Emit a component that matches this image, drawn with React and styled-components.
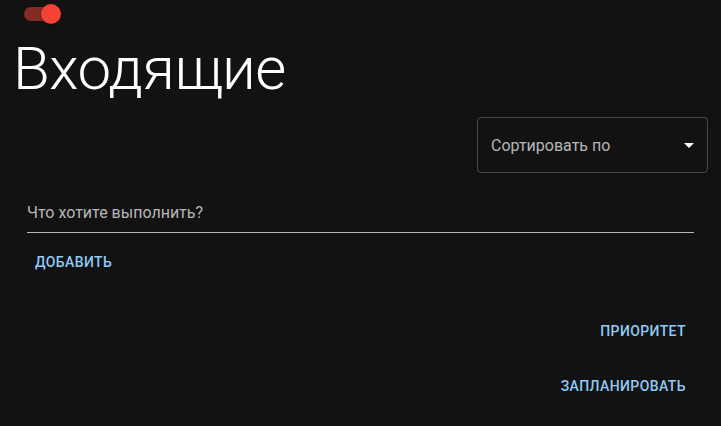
import styled, { createGlobalStyle } from 'styled-components'

const GlobalStyle = createGlobalStyle`
  html, body {
    margin: 0;
    background: #121212;
    color: #fff;
    font-family: Roboto, "Noto Sans", "Liberation Sans", sans-serif;
  }
`

const Page = styled.div`
  padding: 0 13px;
  min-height: 426px;
  box-sizing: border-box;
`

const ThemeSwitch = styled.div`
  position: relative;
  width: 37px;
  height: 28px;
  margin-left: 11px;
`

const Track = styled.div`
  position: absolute;
  top: 7px;
  left: 0;
  width: 34px;
  height: 14px;
  border-radius: 7px;
  background: #f44336;
  opacity: 0.5;
`

const Thumb = styled.div`
  position: absolute;
  top: 4px;
  left: 17px;
  width: 20px;
  height: 20px;
  border-radius: 50%;
  background: #f44336;
  box-shadow: 0 2px 1px -1px rgba(0,0,0,0.2), 0 1px 1px 0 rgba(0,0,0,0.14), 0 1px 3px 0 rgba(0,0,0,0.12);
`

const Title = styled.h2`
  margin: 5px 0 0;
  font-size: 60px;
  font-weight: 300;
  line-height: 72px;
  letter-spacing: -0.5px;
`

const SortRow = styled.div`
  display: flex;
  justify-content: flex-end;
  margin-top: 12px;
`

const SelectBox = styled.div`
  width: 231px;
  height: 56px;
  box-sizing: border-box;
  border: 1px solid rgba(255, 255, 255, 0.23);
  border-radius: 4px;
  display: flex;
  align-items: center;
  justify-content: space-between;
  padding: 0 6px 0 13px;
  font-size: 16px;
  color: rgba(255, 255, 255, 0.7);
`

const ArrowIcon = styled.svg`
  width: 24px;
  height: 24px;
  fill: #fff;
`

const TaskForm = styled.div`
  padding: 0 14px;
  margin-top: 28px;
`

const Field = styled.div`
  height: 31px;
  border-bottom: 1px solid rgba(255, 255, 255, 0.7);
  font-size: 16px;
  line-height: 23px;
  color: rgba(255, 255, 255, 0.7);
`

const TextButton = styled.button`
  background: none;
  border: 0;
  padding: 6px 8px;
  font-family: inherit;
  font-size: 14px;
  font-weight: 500;
  line-height: 24px;
  letter-spacing: 0.4px;
  text-transform: uppercase;
  color: #90caf9;
  cursor: pointer;
  margin-top: ${p => p.$top || 0}px;
`

const Actions = styled.div`
  display: flex;
  flex-direction: column;
  align-items: flex-end;
  padding-right: 14px;
`

export default function App() {
  return (
    <Page>
      <GlobalStyle />
      <ThemeSwitch>
        <Track />
        <Thumb />
      </ThemeSwitch>
      <Title>Входящие</Title>
      <SortRow>
        <SelectBox>
          <span>Сортировать по</span>
          <ArrowIcon viewBox="0 0 24 24">
            <path d="M7 10l5 5 5-5z" />
          </ArrowIcon>
        </SelectBox>
      </SortRow>
      <TaskForm>
        <Field>Что хотите выполнить?</Field>
        <TextButton $top={11}>Добавить</TextButton>
      </TaskForm>
      <Actions>
        <TextButton $top={33}>Приоритет</TextButton>
        <TextButton $top={19}>Запланировать</TextButton>
      </Actions>
    </Page>
  )
}
